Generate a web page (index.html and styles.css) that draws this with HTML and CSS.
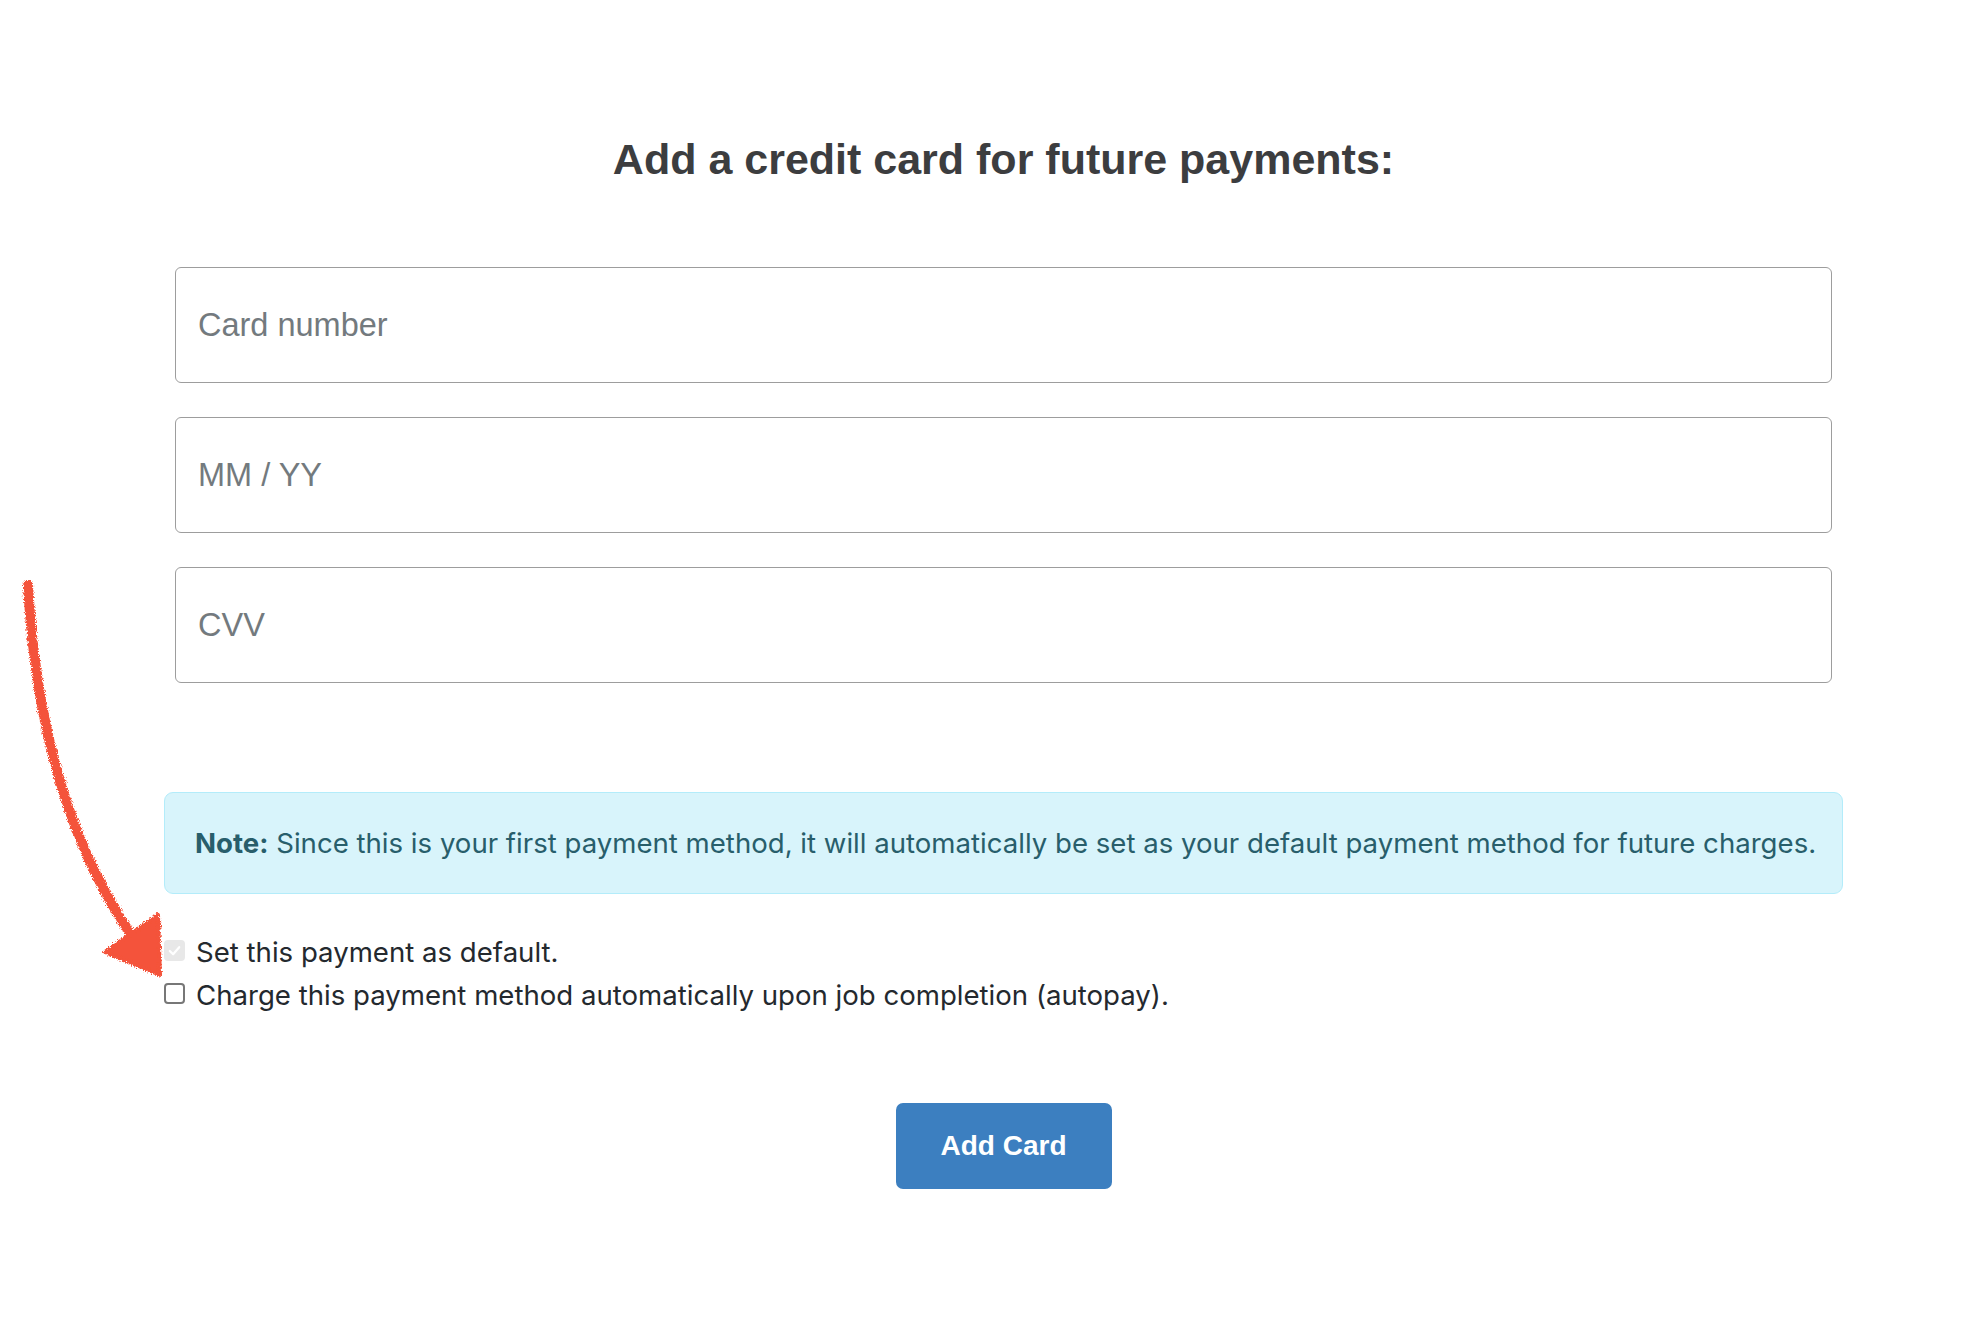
FILE: index.html
```html
<!DOCTYPE html>
<html lang="en">
<head>
<meta charset="utf-8">
<title>Add a credit card</title>
<link rel="stylesheet" href="styles.css">
</head>
<body>
<svg class="annot" width="220" height="1000" viewBox="0 0 220 1000" aria-hidden="true">
  <defs>
    <filter id="rough" x="-20%" y="-20%" width="140%" height="140%">
      <feTurbulence type="fractalNoise" baseFrequency="1.2" numOctaves="2" seed="3" result="n"/>
      <feDisplacementMap in="SourceGraphic" in2="n" scale="6" xChannelSelector="R" yChannelSelector="G"/>
    </filter>
  </defs>
  <g filter="url(#rough)" fill="none" stroke="#f4533a" stroke-linecap="round">
    <path d="M28 585 Q40 800 130 933" stroke-width="10"/>
    <polygon points="105,952 158,915 160,975" fill="#f4533a" stroke-width="4" stroke-linejoin="round"/>
  </g>
</svg>
<main class="wrap">
  <h1 class="title">Add a credit card for future payments:</h1>
  <form class="form">
    <div class="fields">
      <input class="field" type="text" placeholder="Card number">
      <input class="field" type="text" placeholder="MM / YY">
      <input class="field" type="text" placeholder="CVV">
    </div>
    <div class="alert"><strong>Note:</strong> Since this is your first payment method, it will automatically be set as your default payment method for future charges.</div>
    <div class="checks">
      <label class="check">
        <span class="box box-disabled"><svg width="15" height="15" viewBox="0 0 16 16"><path d="M3 8.5 L6.5 12 L13 4.5" fill="none" stroke="#ffffff" stroke-width="2.4" stroke-linecap="round" stroke-linejoin="round"/></svg></span>
        <span class="label">Set this payment as default.</span>
      </label>
      <label class="check">
        <span class="box"></span>
        <span class="label">Charge this payment method automatically upon job completion (autopay).</span>
      </label>
    </div>
    <div class="actions">
      <button class="btn" type="button">Add Card</button>
    </div>
  </form>
</main>
</body>
</html>
```
FILE: styles.css
```css
html, body {
  margin: 0;
  padding: 0;
  background: #ffffff;
}

body {
  font-family: "Liberation Sans", Arial, sans-serif;
  position: relative;
  min-height: 1326px;
}

.annot {
  position: absolute;
  left: 0;
  top: 0;
  z-index: 5;
  pointer-events: none;
}

.wrap {
  margin-left: 164px;
  width: 1679px;
}

.title {
  margin: 135px 0 84px;
  font-family: "Liberation Sans", Arial, sans-serif;
  font-weight: 700;
  font-size: 43px;
  line-height: 48px;
  color: #3c3d3f;
  text-align: center;
}

.form {
  margin: 0;
}

.fields {
  display: flex;
  flex-direction: column;
  gap: 34px;
  padding: 0 11px;
}

.field {
  box-sizing: border-box;
  height: 116px;
  width: 100%;
  margin: 0;
  border: 1px solid #9d9d9d;
  border-radius: 6px;
  padding: 0 22px;
  font-family: "Liberation Sans", Arial, sans-serif;
  font-size: 32.5px;
  color: #333;
  background: #fff;
  outline: none;
}

.field::placeholder {
  color: #737a7e;
}

.alert {
  margin-top: 109px;
  box-sizing: border-box;
  height: 102px;
  border: 1px solid #b3ecfa;
  border-radius: 9px;
  background: #d8f4fb;
  color: #285e6b;
  font-family: Inter, "Noto Sans", sans-serif;
  font-size: 27.6px;
  line-height: 42px;
  padding: 29px 0 0 30px;
  white-space: nowrap;
}

.alert strong {
  font-weight: 700;
}

.checks {
  margin-top: 35px;
  display: flex;
  flex-direction: column;
}

.check {
  display: flex;
  align-items: center;
  height: 43px;
  font-family: Inter, "Noto Sans", sans-serif;
  font-size: 27.6px;
  line-height: 43px;
  color: #24292e;
}

.box {
  box-sizing: border-box;
  width: 21px;
  height: 21px;
  border: 2px solid #777777;
  border-radius: 4px;
  background: #ffffff;
  margin-right: 11px;
  display: flex;
  align-items: center;
  justify-content: center;
  flex: none;
}

.box-disabled {
  border: none;
  background: #e8e8e8;
}

.label {
  padding-top: 4px;
}

.actions {
  margin-top: 88px;
  display: flex;
  justify-content: center;
}

.btn {
  width: 216px;
  height: 86px;
  border: none;
  border-radius: 7px;
  background: #3c7fc0;
  color: #ffffff;
  font-family: "Liberation Sans", Arial, sans-serif;
  font-weight: 700;
  font-size: 28px;
  padding: 0;
  cursor: pointer;
}
```
